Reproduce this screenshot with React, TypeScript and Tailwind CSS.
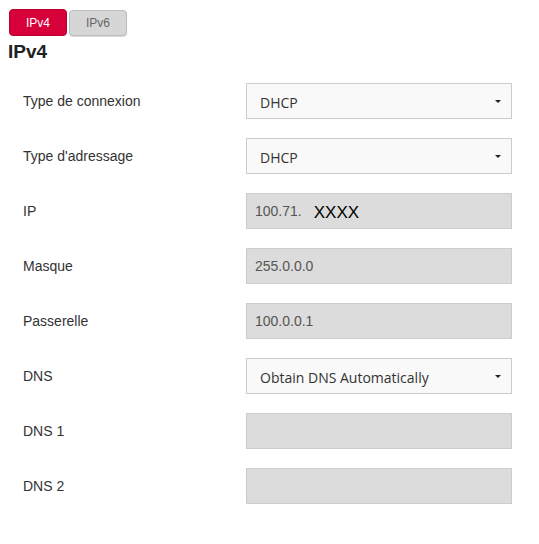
import React from 'react';

type Row = { label: string; kind: 'select' | 'input'; value?: string; extra?: string };

const rows: Row[] = [
  { label: 'Type de connexion', kind: 'select', value: 'DHCP' },
  { label: "Type d'adressage", kind: 'select', value: 'DHCP' },
  { label: 'IP', kind: 'input', value: '100.71.', extra: 'XXXX' },
  { label: 'Masque', kind: 'input', value: '255.0.0.0' },
  { label: 'Passerelle', kind: 'input', value: '100.0.0.1' },
  { label: 'DNS', kind: 'select', value: 'Obtain DNS Automatically' },
  { label: 'DNS 1', kind: 'input' },
  { label: 'DNS 2', kind: 'input' },
];

const Field: React.FC<{ row: Row }> = ({ row }) => {
  if (row.kind === 'select') {
    return (
      <div className="flex h-[36px] w-[266px] items-center justify-between border border-[#cccccc] bg-[#f9f9f9] pl-[13px] pr-[10px]">
        <span className="mt-[3px] font-['Open_Sans',sans-serif] text-[14px] text-[#333333]">{row.value}</span>
        <span className="h-0 w-0 border-x-[3px] border-t-[3px] border-x-transparent border-t-[#222222]" />
      </div>
    );
  }
  return (
    <div className="flex h-[36px] w-[266px] items-center border border-[#cccccc] bg-[#dcdcdc] pl-[8px]">
      {row.value && <span className="text-[14px] text-[#555555]">{row.value}</span>}
      {row.extra && <span className="ml-[12px] mt-[3px] text-[17px] text-black">{row.extra}</span>}
    </div>
  );
};

export default function App() {
  return (
    <div className="min-h-[544px] bg-white font-['Liberation_Sans',Arial,sans-serif] text-[#333333]">
      <div className="flex gap-[2px] pl-[9px] pt-[9px]">
        <button className="h-[27px] w-[58px] rounded-[4px] border border-[#b8002f] bg-[#d8003a] text-[12px] text-white">
          IPv4
        </button>
        <button className="mt-[1px] h-[26px] w-[58px] rounded-[4px] border border-[#bdbdbd] bg-[#d6d6d6] text-[12px] text-[#666666] shadow-[0_1px_1px_rgba(0,0,0,0.15)]">
          IPv6
        </button>
      </div>
      <h2 className="pl-[8px] pt-[4px] text-[19px] font-bold leading-[24px] text-[#222222]">IPv4</h2>
      <div className="flex flex-col gap-[19px] pt-[19px]">
        {rows.map((row) => (
          <div key={row.label} className="flex items-center">
            <div className="w-[246px] pl-[23px] text-[14px] text-[#333333]">{row.label}</div>
            <Field row={row} />
          </div>
        ))}
      </div>
    </div>
  );
}
